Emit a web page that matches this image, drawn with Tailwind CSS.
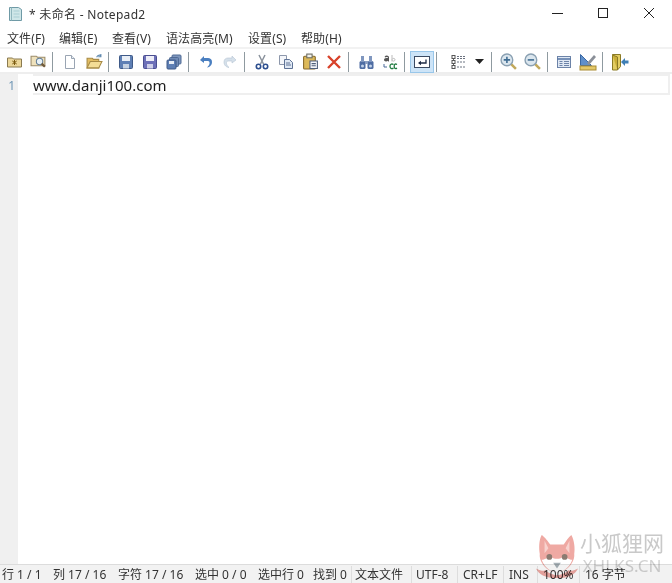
<!DOCTYPE html>
<html lang="zh-CN">
<head>
  <meta charset="UTF-8" />
  <title>* 未命名 - Notepad2</title>
  <script src="https://cdn.jsdelivr.net/npm/@tailwindcss/browser@4"></script>
</head>
<body class="bg-white overflow-hidden font-['Noto_Sans','Noto_Sans_CJK_SC',sans-serif] text-[#222]">
<div class="relative flex flex-col w-[672px] h-[583px] overflow-hidden">

  <!-- title bar -->
  <div class="flex items-center h-[27px] shrink-0">
    <svg class="ml-[8px] w-[15px] h-[16px]" viewBox="0 0 15 16">
      <path d="M1.500 1.500h9l3 2v11h-12z" fill="#cfe6e8" stroke="#6f9aa6"/>
      <path d="M3.500 1.500v13" stroke="#8fb5bd"/>
      <path d="M5.500 5h6M5.500 8h6M5.500 11h6" stroke="#a9cdd3"/>
    </svg>
    <span class="ml-[6px] pt-[2px] text-[12px] tracking-[0.3px] leading-none text-[#333]">* 未命名 - Notepad2</span>
    <div class="ml-auto flex items-center">
      <svg class="w-[46px] h-[27px]" viewBox="0 0 46 27"><path d="M18 13.500h11" stroke="#222"/></svg>
      <svg class="w-[46px] h-[27px]" viewBox="0 0 46 27"><rect x="18.500" y="8.500" width="9" height="9" fill="none" stroke="#222"/></svg>
      <svg class="w-[46px] h-[27px]" viewBox="0 0 46 27"><path d="M18 8l10 10M28 8L18 18" stroke="#222"/></svg>
    </div>
  </div>

  <!-- menu -->
  <div class="flex items-center h-[22px] pt-[3px] shrink-0 text-[12px] tracking-[0.1px] text-[#333] border-b-2 border-[#f2f2f2]">
    <span class="ml-[7px] w-[52px]">文件(F)</span>
    <span class="w-[53px]">编辑(E)</span>
    <span class="w-[54px]">查看(V)</span>
    <span class="w-[82px]">语法高亮(M)</span>
    <span class="w-[53px]">设置(S)</span>
    <span>帮助(H)</span>
  </div>

  <!-- toolbar -->
  <div class="flex items-center h-[25px] pl-[2px] pt-[2px] shrink-0 border-b-2 border-[#eeeeee]">
    <div class="flex items-center justify-center w-6 h-[22px]">
      <svg class="w-[17px] h-4" viewBox="0 0 16 16"><path d="M1 4h5l1 1h8v8H1z" fill="#ecd79a" stroke="#8a7a50"/><path d="M8 6v5M5.800 7l4.400 3M10.200 7l-4.400 3" stroke="#7a5a10"/></svg>
    </div>
    <div class="flex items-center justify-center w-6 h-[22px]">
      <svg class="w-[17px] h-[17px]" viewBox="0 0 16 16"><path d="M1 3h5l1 1h7v8H1z" fill="#efe2bd" stroke="#9b8b68"/><circle cx="9" cy="8" r="3" fill="#e8f1f6" stroke="#66809a"/><path d="M11 10l3 3" stroke="#705a3a" stroke-width="2"/></svg>
    </div>
    <div class="w-2 h-[20px] flex"><div class="ml-[2px] w-px bg-[#8f9aa0]"></div></div>

    <div class="flex items-center justify-center w-6 h-[22px]">
      <svg class="w-4 h-4" viewBox="0 0 16 16"><path d="M3.500 1.500h6l3 3v10h-9z" fill="#fff" stroke="#9aa5b3"/><path d="M9.500 1.500v3h3" fill="#e6edf5" stroke="#9aa5b3"/></svg>
    </div>
    <div class="flex items-center justify-center w-6 h-[22px]">
      <svg class="w-[17px] h-[17px]" viewBox="0 0 16 16"><path d="M1 5h5l1 1h5v8H1z" fill="#e3bd62" stroke="#a78a45"/><path d="M1 14l3-6h11l-3 6z" fill="#f4dd96" stroke="#a78a45"/><path d="M10 4c1-2 3-2.500 4-1.500M14 1v2.500h-2.500" fill="none" stroke="#5b86ad"/></svg>
    </div>
    <div class="w-2 h-[20px] flex"><div class="ml-[2px] w-px bg-[#8f9aa0]"></div></div>

    <div class="flex items-center justify-center w-6 h-[22px]">
      <svg class="w-4 h-4" viewBox="0 0 16 16"><rect x="1.500" y="1.500" width="13" height="13" rx="1" fill="#5e7fb4" stroke="#3f5a88"/><rect x="4" y="2" width="8" height="5" fill="#e8eef6"/><rect x="5" y="10" width="6" height="4.500" fill="#c6d2e2"/></svg>
    </div>
    <div class="flex items-center justify-center w-6 h-[22px]">
      <svg class="w-4 h-4" viewBox="0 0 16 16"><rect x="1.500" y="1.500" width="13" height="13" rx="1" fill="#6d70b8" stroke="#4a4e90"/><rect x="4" y="2" width="8" height="5" fill="#eeeef8"/><rect x="5" y="10" width="6" height="4.500" fill="#cfd0e8"/></svg>
    </div>
    <div class="flex items-center justify-center w-6 h-[22px]">
      <svg class="w-4 h-4" viewBox="0 0 16 16"><rect x="6" y="1" width="9" height="9" rx="1" fill="#7f97bd" stroke="#4f6a95"/><rect x="3.500" y="3.500" width="9" height="9" rx="1" fill="#6f8ab5" stroke="#4f6a95"/><rect x="1" y="6" width="9" height="9" rx="1" fill="#5e7fb4" stroke="#3f5a88"/><rect x="3" y="7" width="5" height="3" fill="#e8eef6"/></svg>
    </div>
    <div class="w-2 h-[20px] flex"><div class="ml-[2px] w-px bg-[#8f9aa0]"></div></div>

    <div class="flex items-center justify-center w-6 h-[22px]">
      <svg class="w-4 h-4" viewBox="0 0 16 16"><path d="M6 2L2 6l4 3V7h4c2 0 2.500 3.500-1 6.500 4-.5 5-3.500 5-5.500 0-3-2-4-4-4H6z" fill="#4a7fc0"/></svg>
    </div>
    <div class="flex items-center justify-center w-6 h-[22px]">
      <svg class="w-4 h-4" viewBox="0 0 16 16"><path d="M10 2l4 4-4 3V7H6c-2 0-2.500 3.500 1 6.500-4-.5-5-3.500-5-5.500 0-3 2-4 4-4h4z" fill="#d5e0ea" stroke="#b5c5d3" stroke-width=".6"/></svg>
    </div>
    <div class="w-2 h-[20px] flex"><div class="ml-[2px] w-px bg-[#8f9aa0]"></div></div>

    <div class="flex items-center justify-center w-6 h-[22px]">
      <svg class="w-4 h-4" viewBox="0 0 16 16"><path d="M5 1l4.500 9M11 1L6.500 10" stroke="#8a929c" stroke-width="1.500"/><circle cx="4.500" cy="12.500" r="2.200" fill="none" stroke="#2d4f8f" stroke-width="1.600"/><circle cx="11.500" cy="12.500" r="2.200" fill="none" stroke="#2d4f8f" stroke-width="1.600"/></svg>
    </div>
    <div class="flex items-center justify-center w-6 h-[22px]">
      <svg class="w-4 h-4" viewBox="0 0 16 16"><path d="M1.500 1.500h7v9h-7z" fill="#f4f6fa" stroke="#8d97ab"/><path d="M6.500 5.500h5l3 3v6h-8z" fill="#dfe8f4" stroke="#5f7396"/><path d="M8 9h4M8 11h5" stroke="#5f7396"/></svg>
    </div>
    <div class="flex items-center justify-center w-6 h-[22px]">
      <svg class="w-[17px] h-[17px]" viewBox="0 0 16 16"><rect x="1.500" y="3" width="11" height="12" rx="1" fill="#dcb95a" stroke="#85682a"/><rect x="4.500" y="1" width="5" height="3.500" fill="#f1f1ea" stroke="#6b6b60"/><path d="M7.500 7.500h7v7h-7z" fill="#f4f6fa" stroke="#4f5f7a"/><path d="M9 10h4M9 12h4" stroke="#4f5f7a"/></svg>
    </div>
    <div class="flex items-center justify-center w-6 h-[22px]">
      <svg class="w-4 h-4" viewBox="0 0 16 16"><path d="M2 2l12 12M14 2L2 14" stroke="#d8422a" stroke-width="2.400"/></svg>
    </div>
    <div class="w-2 h-[20px] flex"><div class="ml-[2px] w-px bg-[#8f9aa0]"></div></div>

    <div class="flex items-center justify-center w-6 h-[22px]">
      <svg class="w-[17px] h-4" viewBox="0 0 16 16"><rect x="1" y="7" width="6" height="8" rx="1.500" fill="#4f6da3"/><rect x="9" y="7" width="6" height="8" rx="1.500" fill="#4f6da3"/><rect x="2.500" y="2" width="3" height="6" fill="#8097bf"/><rect x="10.500" y="2" width="3" height="6" fill="#8097bf"/><rect x="6.500" y="7" width="3" height="3" fill="#8b9ec0"/><circle cx="4" cy="12" r="1.500" fill="#c4d4ea"/><circle cx="12" cy="12" r="1.500" fill="#c4d4ea"/></svg>
    </div>
    <div class="flex items-center justify-center w-6 h-[22px]">
      <svg class="w-4 h-4 overflow-visible" viewBox="0 0 16 16">
        <path d="M4.500 1.500c2 0 2.500 1 2.500 2v4H6.200l-.2-.7C5 7.800 2 8 2 5.800 2 4 4 4 6 4c0-1.500-2-1.200-3-.6l-.3-1C3.300 1.800 4 1.500 4.500 1.500z" fill="#555"/>
        <path d="M10 1v6.500M10 5.500c.5-1.500 3-1.500 3 .2 0 1.800-2.500 1.800-3 .5" fill="none" stroke="#bbb"/>
        <path d="M2 10v3h3" fill="none" stroke="#4a6a9a"/>
        <path d="M11.500 10.500c-2-1.200-3.500 0-3.500 1.800s1.500 3 3.500 1.800M15 10.500c-2-1.200-2.800 0-2.800 1.800s.8 3 2.800 1.800" fill="none" stroke="#1f7a3f" stroke-width="1.300"/>
      </svg>
    </div>
    <div class="w-2 h-[20px] flex"><div class="ml-[2px] w-px bg-[#8f9aa0]"></div></div>

    <div class="flex items-center justify-center w-6 h-[22px] bg-[#cde4f7] border border-[#99c7ea]">
      <svg class="w-4 h-4" viewBox="0 0 16 16"><rect x=".5" y="2.500" width="15" height="11" fill="#fff" stroke="#3a4a62"/><path d="M12 5.500v3.500H5" fill="none" stroke="#1c2a44" stroke-width="1.300"/><path d="M7 6.800L4 9l3 2.300z" fill="#1c2a44"/></svg>
    </div>
    <div class="w-3 h-[20px] flex"><div class="w-px ml-[2px] bg-[#8f9aa0]"></div></div>

    <div class="flex items-center justify-center w-6 h-[22px]">
      <svg class="w-4 h-4" viewBox="0 0 16 16"><path d="M7 2.500h8M7 4.500h8M7 8h8M7 13h8" stroke="#6b7280" stroke-dasharray="2 1"/><path d="M3.500 4v3M3.500 9v3" stroke="#666"/><rect x="2" y="1.500" width="3" height="3" fill="#fff" stroke="#555"/><rect x="2" y="6.500" width="3" height="3" fill="#fff" stroke="#555"/><rect x="2" y="11.500" width="3" height="3" fill="#fff" stroke="#555"/></svg>
    </div>
    <div class="flex items-center justify-center w-[18px] h-[22px]">
      <svg class="w-[9px] h-[5px]" viewBox="0 0 9 5"><path d="M0 0h9L4.500 5z" fill="#222"/></svg>
    </div>
    <div class="w-2 h-[20px] flex"><div class="w-px ml-[3px] bg-[#8f9aa0]"></div></div>

    <div class="flex items-center justify-center w-6 h-[22px]">
      <svg class="w-[17px] h-[17px]" viewBox="0 0 16 16"><path d="M10 10l5 5" stroke="#c2a95c" stroke-width="2.400"/><circle cx="6.500" cy="6.500" r="5.500" fill="#dbe6ee" stroke="#8aa0b2" stroke-width="1.300"/><path d="M6.500 3.500v6M3.500 6.500h6" stroke="#3f6c92" stroke-width="1.500"/></svg>
    </div>
    <div class="flex items-center justify-center w-6 h-[22px]">
      <svg class="w-[17px] h-[17px]" viewBox="0 0 16 16"><path d="M10 10l5 5" stroke="#c2a95c" stroke-width="2.400"/><circle cx="6.500" cy="6.500" r="5.500" fill="#dbe6ee" stroke="#8aa0b2" stroke-width="1.300"/><path d="M3.500 6.500h6" stroke="#3f6c92" stroke-width="1.500"/></svg>
    </div>
    <div class="w-2 h-[20px] flex"><div class="ml-[3px] w-px bg-[#8f9aa0]"></div></div>

    <div class="flex items-center justify-center w-6 h-[22px]">
      <svg class="w-4 h-4" viewBox="0 0 16 16"><rect x="1.500" y="2.500" width="13" height="11" fill="#dfe8f4" stroke="#6c83a8"/><path d="M1.500 5h13" stroke="#5574a4" stroke-width="1.500"/><path d="M3.500 7.500h3M3.500 9.500h3M3.500 11.500h3M8 7.500h5M8 9.500h5M8 11.500h5" stroke="#6c83a8"/></svg>
    </div>
    <div class="flex items-center justify-center w-6 h-[22px]">
      <svg class="w-[18px] h-[18px]" viewBox="0 0 18 18"><path d="M1.500 1.500v11h11z" fill="#5f8fca" stroke="#3a68a4"/><path d="M8 10L15 2l2 2-7 8z" fill="#8a8f98"/><rect x="1" y="13" width="16" height="4" fill="#e4c868" stroke="#a98c35"/></svg>
    </div>
    <div class="w-2 h-[20px] flex"><div class="ml-[2px] w-px bg-[#8f9aa0]"></div></div>

    <div class="flex items-center justify-center w-6 h-[22px]">
      <svg class="w-[18px] h-[18px]" viewBox="0 0 18 18"><path d="M1.500 1.500h8v12l-3 3.500h-5z" fill="#e3cd63" stroke="#8a7a25"/><path d="M1.500 2l5 2v13" fill="#c9ae38" stroke="#8a7a25"/><path d="M10 9l4-4v2.500h3.500v3H14V13z" fill="#3f7fb5"/></svg>
    </div>
  </div>

  <!-- editor -->
  <div class="flex flex-1 min-h-0">
    <div class="w-[18px] bg-[#f0f0f0] shrink-0 flex justify-end">
      <span class="mt-[3px] mr-[3px] text-[12px] leading-[18px] text-[#6f97b5]">1</span>
    </div>
    <div class="flex-1 pl-[15px] pr-[2px]">
      <div class="h-[21px] pt-[2px] flex items-center border-y-2 border-r-2 border-[#efefef] text-[15px] leading-none text-[#1e1e1e]">www.danji100.com</div>
    </div>
  </div>

  <!-- status bar -->
  <div class="flex items-center h-[19px] pt-[1px] shrink-0 border-t border-[#dcdcdc] bg-[#f2f2f2] text-[12px] leading-none text-[#333] whitespace-nowrap">
    <span class="ml-[2px] w-[51px]">行 1 / 1</span>
    <span class="w-[65px]">列 17 / 16</span>
    <span class="w-[77px]">字符 17 / 16</span>
    <span class="w-[63px]">选中 0 / 0</span>
    <span class="w-[55px]">选中行 0</span>
    <span class="w-[38px]">找到 0</span>
    <span class="border-l border-[#dddddd] pl-[3px] w-[60px] h-full flex items-center">文本文件</span>
    <span class="border-l border-[#dddddd] pl-[4px] w-[46px] h-full flex items-center">UTF-8</span>
    <span class="border-l border-[#dddddd] pl-[5px] w-[46px] h-full flex items-center">CR+LF</span>
    <span class="border-l border-[#dddddd] pl-[5px] w-[34px] h-full flex items-center">INS</span>
    <span class="border-l border-[#dddddd] pl-[5px] w-[42px] h-full flex items-center">100%</span>
    <span class="border-l border-[#dddddd] pl-[5px] h-full flex items-center">16 字节</span>
  </div>

  <!-- watermark -->
  <svg class="absolute left-[533px] top-[534px] w-[48px] h-[44px] mix-blend-multiply" viewBox="0 0 48 46">
    <path d="M8 1c3 2 7 7 9 10h14c2-3 5-8 8-10 3 5 4 14 3 20 1 8-7 19-18 19S5 29 6 21C5 15 5 6 8 1z" fill="#efa9a3"/>
    <path d="M11 7l4 8-4 5zM37 7l-4 8 4 5z" fill="#f8d2ce"/>
    <path d="M8 27c4 0 7-3 9-4 3 4 11 4 14 0 2 1 5 4 9 4-3 8-9 13-16 13S11 35 8 27z" fill="#fff"/>
    <circle cx="16" cy="24" r="3" fill="#8c7b72"/>
    <circle cx="32" cy="24" r="3" fill="#8c7b72"/>
    <path d="M20 30h8l-4 6z" fill="#a6b0b6"/>
    <path d="M2 36c3 6 9 10 22 10s19-4 22-10c-4 2-8 3-10 2-3 3-8 5-12 5s-9-2-12-5c-2 1-6 0-10-2z" fill="#efa9a3"/>
  </svg>
  <div class="absolute left-[580px] top-[533px] flex flex-col items-center leading-none mix-blend-multiply">
    <span class="text-[21px] text-[#c9c9c9]">小狐狸网</span>
    <span class="mt-[3px] text-[17px] text-[#d2d2d2]">XHLKS.CN</span>
  </div>
</div>
</body>
</html>
